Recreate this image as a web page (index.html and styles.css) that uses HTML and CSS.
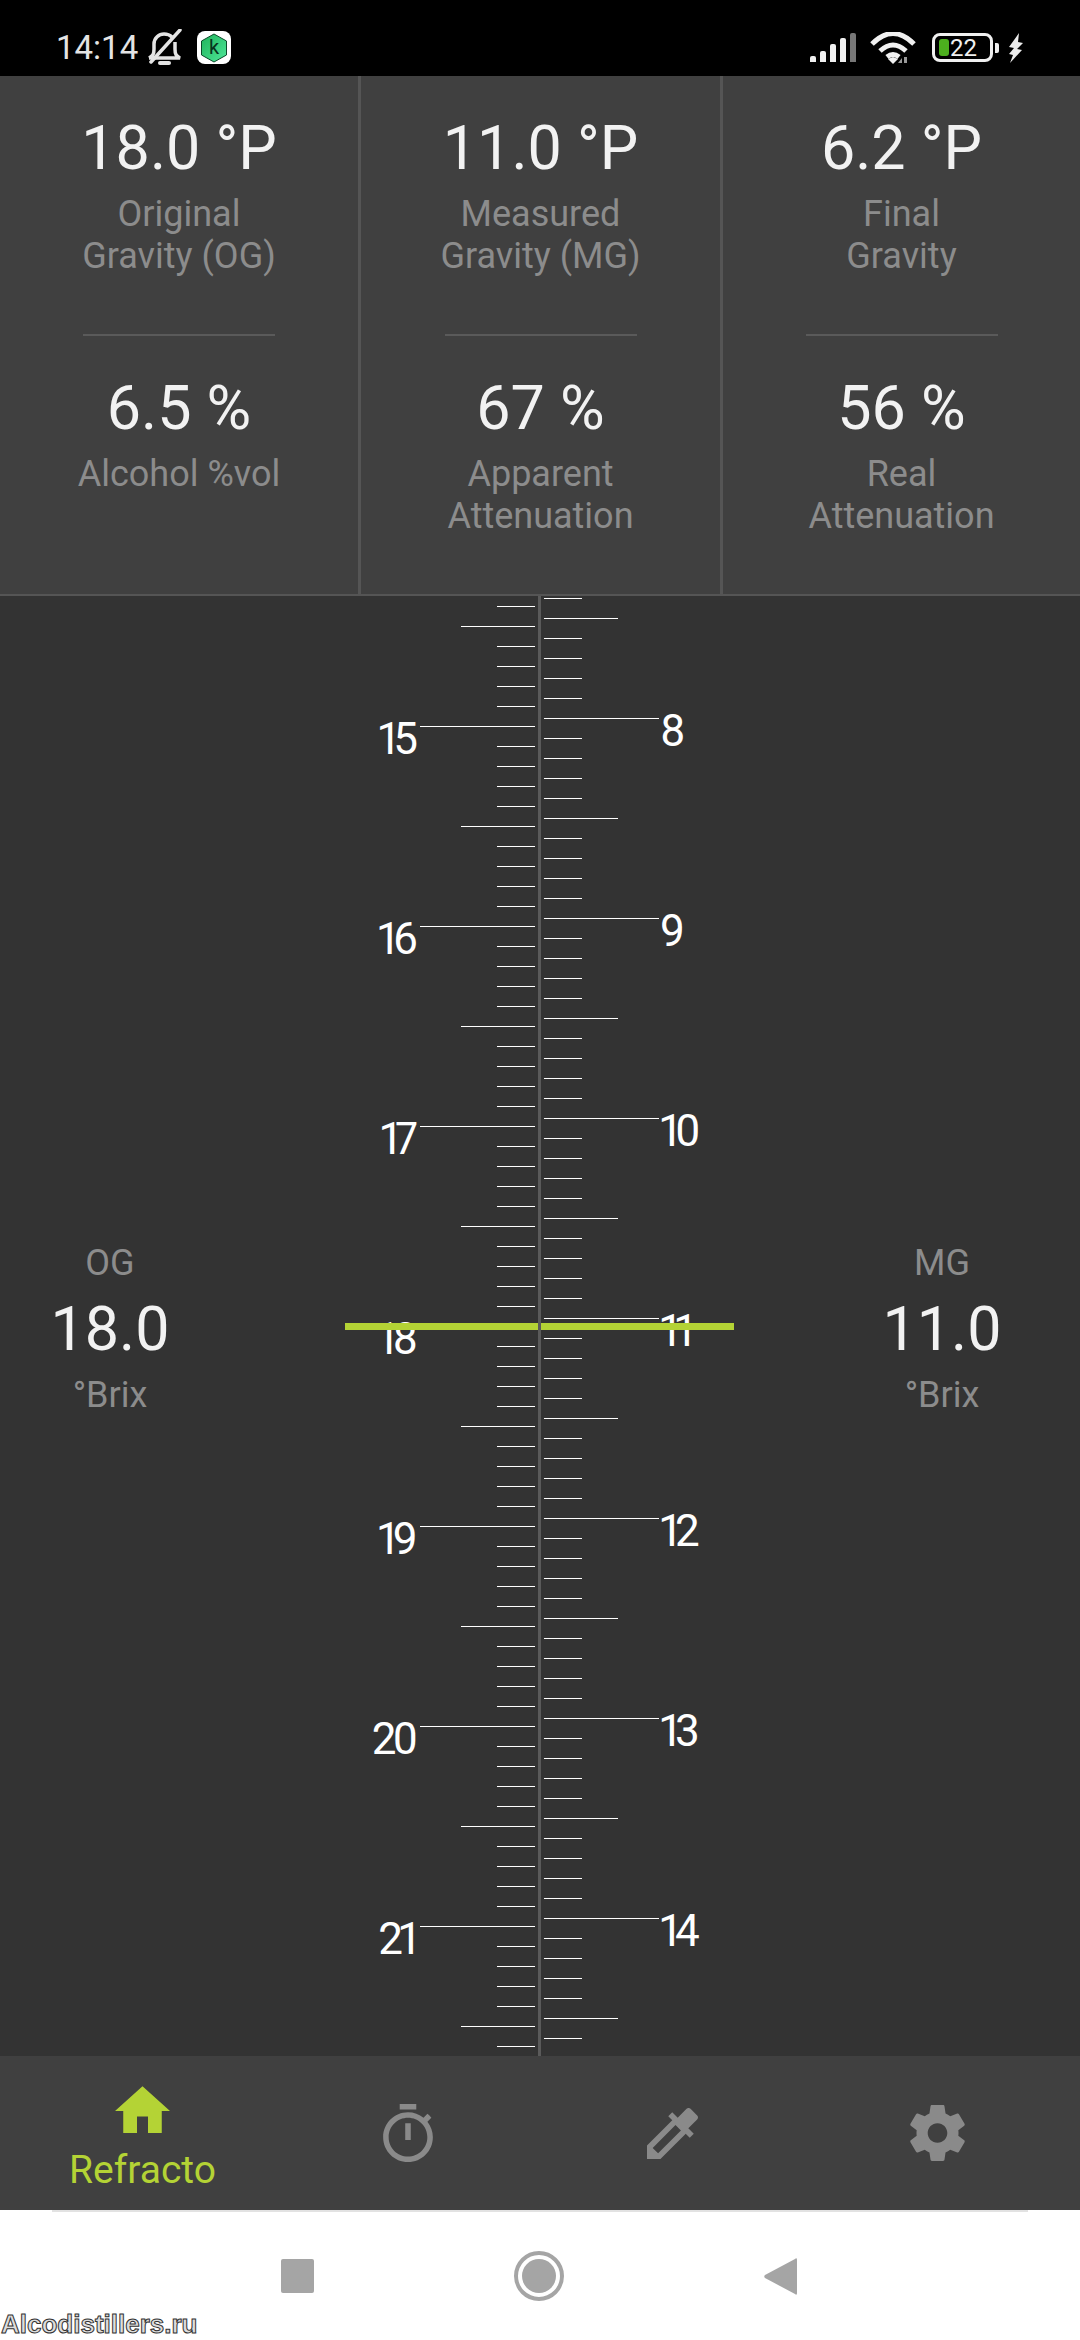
FILE: index.html
```html
<!DOCTYPE html>
<html lang="en">
<head>
  <meta charset="UTF-8">
  <meta name="viewport" content="width=device-width, initial-scale=1.0">
  <title>Refracto</title>
  <link rel="stylesheet" href="styles.css">
</head>
<body>
  <div class="statusbar">
    <div class="status-left">
      <span class="clock">14:14</span>
      <svg class="bell" width="35" height="37" viewBox="0 0 35 37" fill="none" stroke="#e4e4e4" stroke-width="3.500">
        <path d="M2 29c4-2 5-4 5-9v-5c0-6 5-10 10-10 3 0 6 1 8 3M28 13c0 2 0 5 0 7 0 5 1 7 5 9H2"/>
        <path d="M4 33L33 1" stroke-linecap="round"/>
        <path d="M13 34h9" stroke-width="4" stroke-linecap="round"/>
      </svg>
      <span class="app-badge">
        <svg width="28" height="30" viewBox="0 0 28 30">
          <defs>
            <linearGradient id="hexfill" x1="0" y1="0" x2="1" y2="1">
              <stop offset="0" stop-color="#1fb25a"/>
              <stop offset="1" stop-color="#4fe89a"/>
            </linearGradient>
          </defs>
          <path d="M14 1l12.500 7v14L14 29 1.500 22V8z" fill="url(#hexfill)" stroke="#0b4a2a" stroke-width="1"/>
        </svg>
        <span class="app-badge-letter">k</span>
      </span>
    </div>
    <div class="status-right">
      <div class="signal">
        <span class="bar bar-1"></span>
        <span class="bar bar-2"></span>
        <span class="bar bar-3"></span>
        <span class="bar bar-4"></span>
        <span class="bar bar-5"></span>
      </div>
      <svg class="wifi" width="46" height="32" viewBox="0 0 46 32" fill="none" stroke="#f0f0f0" stroke-width="5">
        <path d="M2 12Q23-9 44 12"/>
        <path d="M10 19Q23 7 36 19"/>
        <path d="M17 25Q23 20 29 25"/>
        <path d="M18 27l5 5 5-5-5-2z" fill="#f0f0f0" stroke="none"/>
        <path d="M32 31v-5l-4 5zM34 31h3v-6h-3z" fill="#999" stroke="none"/>
      </svg>
      <div class="battery">
        <div class="battery-body">
          <span class="battery-fill"></span>
          <span class="battery-text">22</span>
        </div>
        <span class="battery-nub"></span>
      </div>
      <svg class="bolt" width="16" height="30" viewBox="0 0 16 30">
        <path d="M11 0L1 14l5 1-5 6 4 1-3 8 12-13-5-1 6-6-5-1z" fill="#ececec"/>
      </svg>
    </div>
  </div>

  <div class="stats">
    <div class="stat-col">
      <div class="stat-top">
        <div class="stat-value">18.0 °P</div>
        <div class="stat-label">Original<br>Gravity (OG)</div>
      </div>
      <div class="stat-rule"></div>
      <div class="stat-value">6.5 %</div>
      <div class="stat-label">Alcohol %vol</div>
    </div>
    <div class="stat-col">
      <div class="stat-top">
        <div class="stat-value">11.0 °P</div>
        <div class="stat-label">Measured<br>Gravity (MG)</div>
      </div>
      <div class="stat-rule"></div>
      <div class="stat-value">67 %</div>
      <div class="stat-label">Apparent<br>Attenuation</div>
    </div>
    <div class="stat-col">
      <div class="stat-top">
        <div class="stat-value">6.2 °P</div>
        <div class="stat-label">Final<br>Gravity</div>
      </div>
      <div class="stat-rule"></div>
      <div class="stat-value">56 %</div>
      <div class="stat-label">Real<br>Attenuation</div>
    </div>
  </div>

  <div class="meter">
    <div class="readout readout-left">
      <div class="readout-label">OG</div>
      <div class="readout-value">18.0</div>
      <div class="readout-label">°Brix</div>
    </div>
    <div class="ruler ruler-left">
      <div class="ruler-num">15</div>
      <div class="ruler-num">16</div>
      <div class="ruler-num">17</div>
      <div class="ruler-num">18</div>
      <div class="ruler-num">19</div>
      <div class="ruler-num">20</div>
      <div class="ruler-num">21</div>
    </div>
    <div class="ruler-axis"></div>
    <div class="ruler ruler-right">
      <div class="ruler-num">8</div>
      <div class="ruler-num">9</div>
      <div class="ruler-num">10</div>
      <div class="ruler-num">11</div>
      <div class="ruler-num">12</div>
      <div class="ruler-num">13</div>
      <div class="ruler-num">14</div>
    </div>
    <div class="readout readout-right">
      <div class="readout-label">MG</div>
      <div class="readout-value">11.0</div>
      <div class="readout-label">°Brix</div>
    </div>
    <div class="marker">
      <span class="marker-seg"></span>
      <span class="marker-seg"></span>
    </div>
  </div>

  <div class="tabs">
    <div class="tab tab-active">
      <svg width="55" height="47" viewBox="2 3 20 17" fill="#b4d335">
        <path d="M10 20v-6h4v6h5v-8h3L12 3 2 12h3v8z"/>
      </svg>
      <span class="tab-label">Refracto</span>
    </div>
    <div class="tab">
      <svg width="50" height="58" viewBox="3 1 18 21" fill="#8a8a8a">
        <path d="M15 1H9v2h6V1zm-4 13h2V8h-2v6zm8.030-6.610l1.420-1.420c-.43-.51-.9-.99-1.410-1.410l-1.420 1.420C16.070 4.740 14.120 4 12 4c-4.970 0-9 4.030-9 9s4.020 9 9 9 9-4.030 9-9c0-2.120-.74-4.070-1.970-5.610zM12 20c-3.870 0-7-3.130-7-7s3.130-7 7-7 7 3.130 7 7-3.130 7-7 7z"/>
      </svg>
    </div>
    <div class="tab">
      <svg width="51" height="51" viewBox="3 3 18 18" fill="#8a8a8a">
        <path d="M20.710 5.630l-2.340-2.340c-.39-.39-1.020-.39-1.410 0l-3.120 3.120-1.930-1.910-1.410 1.410 1.420 1.420L3 16.250V21h4.750l8.920-8.920 1.420 1.420 1.410-1.410-1.920-1.920 3.120-3.120c.4-.4.4-1.030.01-1.420zM6.920 19L5 17.080l8.060-8.060 1.920 1.920L6.920 19z"/>
      </svg>
    </div>
    <div class="tab">
      <svg width="55" height="56" viewBox="2.300 2 19.400 20" fill="#8a8a8a">
        <path d="M19.430 12.980c.04-.32.07-.64.07-.98s-.03-.66-.07-.98l2.110-1.650c.19-.15.24-.42.12-.64l-2-3.460c-.12-.22-.39-.3-.61-.22l-2.490 1c-.52-.4-1.080-.73-1.690-.98l-.38-2.650C14.460 2.180 14.250 2 14 2h-4c-.25 0-.46.18-.49.42l-.38 2.650c-.61.25-1.170.59-1.690.98l-2.490-1c-.23-.09-.49 0-.61.22l-2 3.460c-.13.22-.07.49.12.64l2.110 1.650c-.04.32-.07.65-.07.98s.03.66.07.98l-2.110 1.650c-.19.15-.24.42-.12.64l2 3.460c.12.22.39.3.61.22l2.490-1c.52.4 1.080.73 1.690.98l.38 2.650c.03.24.24.42.49.42h4c.25 0 .46-.18.49-.42l.38-2.650c.61-.25 1.170-.59 1.690-.98l2.490 1c.23.09.49 0 .61-.22l2-3.460c.12-.22.07-.49-.12-.64l-2.110-1.650zM12 15.500c-1.930 0-3.500-1.570-3.500-3.500s1.570-3.500 3.500-3.500 3.500 1.570 3.500 3.500-1.570 3.500-3.500 3.500z"/>
      </svg>
    </div>
  </div>

  <div class="sysnav">
    <div class="sysnav-rule"></div>
    <div class="sysnav-buttons">
      <span class="sys-square"></span>
      <span class="sys-circle"></span>
      <svg width="33" height="37" viewBox="0 0 33 37">
        <path d="M33 2v33c0 2-1 2-2 1L1 20c-1-1-1-2 0-3L31 1c1-1 2-1 2 1z" fill="#a5a5a5"/>
      </svg>
    </div>
    <span class="watermark">Alcodistillers.ru</span>
  </div>
</body>
</html>
```

FILE: styles.css
```css
* {
  box-sizing: border-box;
}
body {
  margin: 0;
  width: 1080px;
  height: 2340px;
  overflow: hidden;
  background: #333;
  font-family: 'Roboto', sans-serif;
}

/* status bar */
.statusbar {
  height: 76px;
  background: #000;
  display: flex;
  justify-content: space-between;
  align-items: center;
  padding: 19px 56px 0 56px;
}
.status-left, .status-right {
  display: flex;
  align-items: center;
}
.clock {
  color: #e4e4e4;
  font-size: 33px;
  line-height: 40px;
}
.bell {
  margin-left: 9px;
}
.app-badge {
  position: relative;
  width: 34px;
  height: 33px;
  margin-left: 15px;
  background: #fff;
  border-radius: 8px;
  display: flex;
  align-items: center;
  justify-content: center;
}
.app-badge-letter {
  position: absolute;
  left: 0;
  right: 0;
  top: 5px;
  text-align: center;
  font-size: 20px;
  line-height: 22px;
  color: #08331d;
}
.signal {
  display: flex;
  align-items: flex-end;
  gap: 4px;
  height: 29px;
}
.bar {
  width: 6px;
  background: #f0f0f0;
  border-radius: 2px 2px 0 0;
}
.bar-1 { height: 6px; }
.bar-2 { height: 11px; }
.bar-3 { height: 18px; }
.bar-4 { height: 24px; }
.bar-5 { height: 29px; background: #777; }
.wifi {
  margin-left: 14px;
}
.battery {
  display: flex;
  align-items: center;
  margin-left: 16px;
}
.battery-body {
  width: 61px;
  height: 29px;
  border: 3px solid #f0f0f0;
  border-radius: 8px;
  display: flex;
  align-items: center;
  padding-left: 4px;
}
.battery-fill {
  width: 10px;
  height: 17px;
  background: #4caf1e;
  border-radius: 3px;
}
.battery-text {
  color: #f0f0f0;
  font-size: 24px;
  line-height: 24px;
  margin-left: 1px;
}
.battery-nub {
  width: 4px;
  height: 10px;
  margin-left: 2px;
  background: #f0f0f0;
  border-radius: 0 2px 2px 0;
}
.bolt {
  margin-left: 9px;
}

/* top stats */
.stats {
  height: 520px;
  background: #404040;
  border-bottom: 2px solid #555;
  display: grid;
  grid-template-columns: 361px 362px 1fr;
}
.stat-col {
  border-right: 3px solid #555;
  padding-top: 37px;
  display: flex;
  flex-direction: column;
  align-items: center;
  text-align: center;
}
.stat-col:last-child {
  border-right: none;
}
.stat-top {
  height: 221px;
}
.stat-value {
  color: #f2f2f2;
  font-size: 61px;
  line-height: 70px;
  margin-bottom: 10px;
}
.stat-label {
  color: #8c8c8c;
  font-size: 36px;
  line-height: 42px;
}
.stat-rule {
  width: 192px;
  height: 2px;
  margin-bottom: 37px;
  background: #5a5a5a;
}

/* meter with the two scales */
.meter {
  position: relative;
  height: 1460px;
  background: #333;
  display: flex;
  overflow: hidden;
}
.readout {
  display: flex;
  flex-direction: column;
  justify-content: center;
  align-items: center;
  text-align: center;
  padding-top: 6px;
}
.readout-left {
  width: 360px;
  padding-right: 140px;
}
.readout-right {
  width: 361px;
  padding-left: 112px;
  padding-right: 27px;
}
.readout-value {
  color: #f2f2f2;
  font-size: 61px;
  line-height: 70px;
  margin: 10px 0;
}
.readout-label {
  color: #8c8c8c;
  font-size: 36px;
  line-height: 42px;
}
.ruler {
  width: 175px;
  height: 1460px;
  display: flex;
  flex-direction: column;
  background-repeat: no-repeat;
}
.ruler-left {
  padding: 115px 121px 0 0;
  text-align: right;
  background-image:
    repeating-linear-gradient(to bottom, transparent 0 10px, #fff 10px 11px, transparent 11px 20px),
    repeating-linear-gradient(to bottom, transparent 0 30px, #fff 30px 31px, transparent 31px 200px),
    repeating-linear-gradient(to bottom, transparent 0 130px, #fff 130px 131px, transparent 131px 200px);
  background-size: 38px 100%, 74px 100%, 115px 100%;
  background-position: right top;
}
.ruler-right {
  padding: 107px 0 0 116px;
  text-align: left;
  background-image:
    repeating-linear-gradient(to bottom, transparent 0 2px, #fff 2px 3px, transparent 3px 20px),
    repeating-linear-gradient(to bottom, transparent 0 22px, #fff 22px 23px, transparent 23px 200px),
    repeating-linear-gradient(to bottom, transparent 0 122px, #fff 122px 123px, transparent 123px 200px);
  background-size: 38px 100%, 74px 100%, 115px 100%;
  background-position: left top;
}
.ruler-num {
  flex: 0 0 200px;
  color: #fff;
  font-size: 44px;
  line-height: 56px;
  letter-spacing: -4px;
  font-variant-numeric: proportional-nums;
}
.ruler-axis {
  width: 9px;
  display: flex;
  justify-content: center;
}
.ruler-axis::before {
  content: "";
  width: 3px;
  background: #5a5a5a;
}
.marker {
  position: absolute;
  left: 345px;
  top: 727px;
  width: 389px;
  height: 7px;
  display: flex;
  gap: 3px;
}
.marker-seg {
  flex: 1;
  background: #b4d335;
}

/* bottom tabs */
.tabs {
  height: 154px;
  background: #404040;
  padding: 0 10px;
  display: flex;
}
.tab {
  flex: 1;
  display: flex;
  flex-direction: column;
  align-items: center;
  justify-content: center;
}
.tab-active {
  justify-content: flex-start;
  padding-top: 30px;
}
.tab-label {
  color: #b4d335;
  font-size: 39px;
  line-height: 40px;
  margin-top: 17px;
}

/* android nav */
.sysnav {
  position: relative;
  height: 130px;
  background: #fff;
}
.sysnav-rule {
  height: 2px;
  margin: 0 52px;
  background: #e2e2e2;
}
.sysnav-buttons {
  height: 128px;
  display: flex;
  align-items: center;
  justify-content: center;
  gap: 200px;
  padding-right: 3px;
}
.sys-square {
  width: 33px;
  height: 34px;
  background: #a5a5a5;
  border-radius: 2px;
}
.sys-circle {
  width: 50px;
  height: 50px;
  border: 4px solid #a5a5a5;
  border-radius: 50%;
  padding: 4px;
  background: #a5a5a5;
  background-clip: content-box;
}
.watermark {
  position: absolute;
  left: 1px;
  top: 99px;
  font-family: 'Liberation Sans', sans-serif;
  font-weight: bold;
  font-size: 26px;
  line-height: 30px;
  color: #ddd;
  -webkit-text-stroke: 1px #333;
}
```
